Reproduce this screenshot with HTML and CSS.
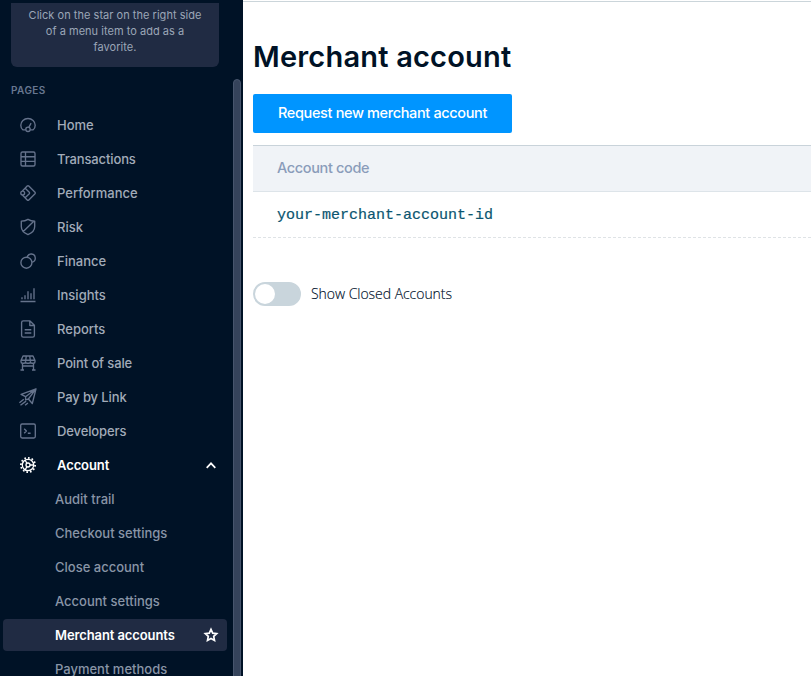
FILE: index.html
```html
<!DOCTYPE html>
<html lang="en">
<head>
<meta charset="utf-8">
<title>Merchant account</title>
<link rel="stylesheet" href="styles.css">
</head>
<body>
<div class="app">
  <aside class="sidebar">
    <div class="sidebar-content">
      <p class="hint">Click on the star on the right side<br>of a menu item to add as a<br>favorite.</p>
      <h2 class="section">PAGES</h2>
      <nav class="menu">
        <a class="item"><svg class="icon" viewBox="0 0 20 20"><path d="M7.6 14.8H4.8C3.5 13.8 2.8 12.2 2.8 10.3a7.2 6.8 0 0 1 14.4 0c0 1.9-.7 3.5-2 4.5h-2.8M10.9 12.2l2.2-4"/><circle cx="10" cy="14.3" r="2.2"/></svg><span>Home</span></a>
        <a class="item"><svg class="icon" viewBox="0 0 20 20"><rect x="3" y="3" width="14" height="14" rx="1.5"/><path d="M7.5 3v14M3 7.7h14M3 12.3h14"/></svg><span class="tight">Transactions</span></a>
        <a class="item"><svg class="icon" viewBox="0 0 20 20"><path d="M4.4 7.9 9.2 3.1q.8-.7 1.6 0l6.2 6.1q.7.8 0 1.6l-6.2 6.1q-.8.7-1.6 0l-4.8-4.8M7.4 5.4l3.9 3.8q.7.8 0 1.6l-3.9 3.8"/><circle cx="4.7" cy="10" r="1.9"/></svg><span>Performance</span></a>
        <a class="item"><svg class="icon" viewBox="0 0 20 20"><path d="M3.3 4.2Q7 4 10 2.3q3 1.7 6.7 1.9v5.3c0 3.9-2.7 6.5-6.7 8.1-4-1.6-6.7-4.2-6.7-8.1zM5.3 14.5 15.8 4.2"/></svg><span>Risk</span></a>
        <a class="item"><svg class="icon" viewBox="0 0 20 20"><circle cx="8.4" cy="11.7" r="5.5"/><path d="M9.2 6.1a4.1 4.1 0 1 1 4.7 5"/></svg><span>Finance</span></a>
        <a class="item"><svg class="icon" viewBox="0 0 20 20"><path d="M2.5 16.5h15M4 12.3v2M7 10.3v4M10 6.3v8M13 8.3v6M16 3.3v11"/></svg><span>Insights</span></a>
        <a class="item"><svg class="icon" viewBox="0 0 20 20"><path d="M12 1.9H5.3q-1.7 0-1.7 1.7v12.8q0 1.7 1.7 1.7h9.4q1.7 0 1.7-1.7V6.3zM11.8 2v4.5h4.5M6.7 10.7h6.6M6.7 14h6.6"/></svg><span>Reports</span></a>
        <a class="item"><svg class="icon" viewBox="0 0 20 20"><path d="M5 3h10l2 4.5v1.2q0 1.5-1.5 1.5h-1.6q-1.4 0-1.4-1.5 0 1.5-1.5 1.5H9q-1.5 0-1.5-1.5 0 1.5-1.4 1.5H4.500q-1.5 0-1.5-1.500V7.500zM3 7.200h14M8.300 3l-.8 5.700M11.700 3l.8 5.700M4.500 10.500v6.200M15.500 10.500v6.200M4.500 13h11M2.500 17h3.500M14 17h3.500"/></svg><span class="tight">Point of sale</span></a>
        <a class="item"><svg class="icon" viewBox="0 0 20 20"><path d="M18 1.8 3.1 7.400l4.500 2.300L18 1.800l-3.700 14.700-3.900-4.500L18 1.800M7.600 9.700v3.100l2.800-.8M5.800 12.300l-4.400 3.500M8.100 14.100l-5.600 4.100M9.900 15.900l-2.800 2.300"/></svg><span class="tight">Pay by Link</span></a>
        <a class="item"><svg class="icon" viewBox="0 0 20 20"><rect x="2.700" y="3" width="14.600" height="14" rx="1.400"/><path d="m6.200 7.800 2.200 2.200-2.200 2.200M9.800 12.200h2.800"/></svg><span class="tight">Developers</span></a>
        <a class="item open"><svg class="icon gear" viewBox="0 0 20 20"><circle cx="10" cy="10" r="5.700"/><circle class="teeth" cx="10" cy="10" r="7.100" pathLength="48"/><circle cx="10" cy="10" r="2"/><path d="M9 8.300 7 5M12 10h3.500M9 11.700 7 15"/></svg><span>Account</span><svg class="trail" viewBox="0 0 16 16"><path d="m3.700 10.800 4.300-4.500 4.300 4.500"/></svg></a>
        <a class="item sub"><span>Audit trail</span></a>
        <a class="item sub"><span>Checkout settings</span></a>
        <a class="item sub"><span>Close account</span></a>
        <a class="item sub"><span>Account settings</span></a>
        <a class="item sub selected"><span>Merchant accounts</span><svg class="trail" viewBox="0 0 16 16"><path d="m8 2.300 1.700 3.800 4 .5-3 2.800.8 4L8 11.400l-3.500 2 .8-4-3-2.800 4-.5z"/></svg></a>
        <a class="item sub"><span>Payment methods</span></a>
      </nav>
    </div>
    <div class="scrollbar"></div>
  </aside>
  <main class="main">
    <h1>Merchant account</h1>
    <button class="primary"><span>Request new merchant account</span></button>
    <div class="table">
      <div class="head"><span>Account code</span></div>
      <div class="row"><span>your-merchant-account-id</span></div>
    </div>
    <label class="closed"><span class="switch"></span><span class="label">Show Closed Accounts</span></label>
  </main>
</div>
</body>
</html>
```

FILE: styles.css
```css
* { box-sizing: border-box; }
body { margin: 0; background: #fff; font-family: Inter, "Liberation Sans", sans-serif; overflow: hidden; }
.app { display: flex; height: 676px; overflow: hidden; }
.sidebar { display: flex; flex: 0 0 243px; background: #001226; overflow: hidden; }
.sidebar-content { flex: 0 0 233px; padding: 3px 6px 0 3px; }
.hint { height: 64px; margin: 0 8px; padding-top: 4px; border-radius: 0 0 6px 6px; background: #202b43; color: #9ba6b7; font-size: 11px; line-height: 16px; letter-spacing: .03px; text-align: center; white-space: nowrap; }
.section { margin: 15px 8px 0; height: 17px; color: #687790; font-size: 10px; line-height: 16px; font-weight: 600; letter-spacing: .45px; }
.menu { display: flex; flex-direction: column; gap: 2px; margin-top: 10px; }
.item { display: flex; align-items: center; flex: 0 0 32px; width: 224px; padding: 0 8px 0 15px; border-radius: 4px; color: #a2abb9; font-size: 13px; font-weight: 500; line-height: 20px; white-space: nowrap; }
.tight { letter-spacing: -.12px; }
.icon { width: 20px; height: 20px; margin-right: 19px; fill: none; stroke: #65738c; stroke-width: 1.35; stroke-linejoin: round; }
.item.open, .item.selected { color: #fff; font-weight: 600; letter-spacing: -.1px; }
.sub { padding-left: 52px; color: #8995a6; }
.item.selected { background: #202b43; }
.icon.gear { stroke: #fff; stroke-width: 1.3; }
.gear .teeth { stroke-width: 1.8; stroke-dasharray: 1.8 2.2; }
.trail { width: 16px; height: 16px; margin-left: auto; fill: none; stroke: #fff; stroke-width: 1.7; }
.scrollbar { width: 8px; height: 620px; margin-top: 79px; border: 1px solid #47556d; border-radius: 4px; background: #35435b; }
.main { flex: 1; min-width: 0; border-top: 1px solid #cbd5da; margin-top: 1px; padding: 36px 0 0 10px; }
h1 { margin: 0; height: 38px; color: #001226; font-size: 29px; line-height: 38px; font-weight: 600; letter-spacing: .2px; white-space: nowrap; }
.primary { display: block; width: 259px; height: 39px; margin: 18px 0 12px; padding: 0; border: 0; border-radius: 2px; background: #0095ff; color: #fff; font: 500 14.5px/37px Inter, sans-serif; letter-spacing: -.36px; white-space: nowrap; }
.primary span { display: block; height: 39px; }
.head { height: 47px; padding-left: 24px; border-top: 1px solid #c9d3da; border-bottom: 1px solid #dde4e9; background: #f0f3f7; color: #8a9cba; font-size: 14.5px; font-weight: 500; line-height: 44px; letter-spacing: -.36px; }
.row { height: 46px; padding-left: 24px; border-bottom: 1px dashed #dfe3e6; color: #0b5670; font: 15px/47px "Courier New", "Liberation Mono", monospace; -webkit-text-stroke: .2px #0b5670; }
.closed { display: flex; align-items: center; height: 24px; margin-top: 44px; }
.switch { width: 48px; height: 24px; border: 2px solid #c9d5dc; border-radius: 12px; background: #c9d5dc; }
.switch::before { content: ""; display: block; width: 20px; height: 20px; border-radius: 50%; background: #fff; }
.label { margin-left: 10px; color: #00112c; font: 300 14px/24px "Open Sans", sans-serif; letter-spacing: -.04px; -webkit-text-stroke: .15px #00112c; white-space: nowrap; }
```
